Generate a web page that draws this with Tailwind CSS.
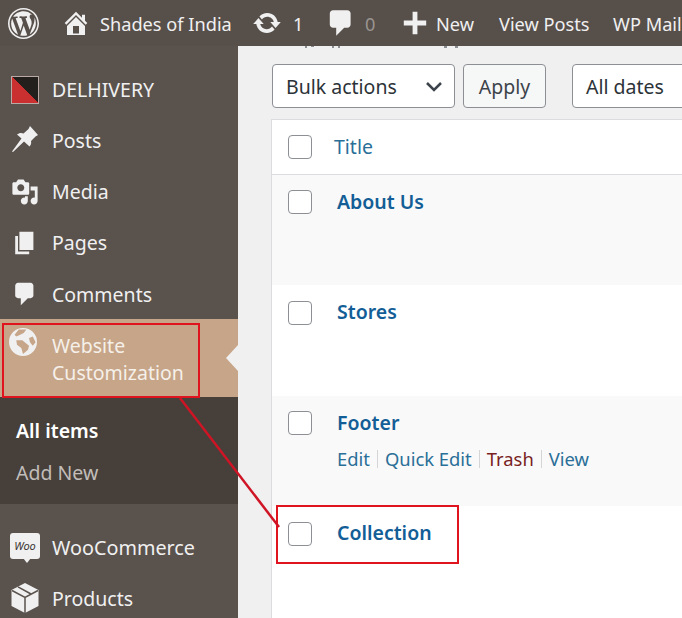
<!doctype html>
<html><head><meta charset="utf-8"><script src="https://cdn.jsdelivr.net/npm/@tailwindcss/browser@4"></script></head>
<body class="m-0">
<div class="relative w-[682px] h-[618px] overflow-hidden flex flex-col bg-[#f0f0f1] font-['Noto_Sans',sans-serif] text-[19.5px] leading-[26px]">
  <!-- top bar -->
  <header class="h-[46px] shrink-0 bg-[#574f4a] text-[#f0f0f1] flex items-center whitespace-nowrap text-[18.2px]">
    <svg class="ml-[8px] w-[31px] h-[31px] shrink-0" viewBox="0 0 20 20" fill="currentColor"><path d="M20 10c0-5.52-4.48-10-10-10S0 4.48 0 10s4.48 10 10 10 10-4.48 10-10zM10 1.01c4.96 0 8.99 4.03 8.99 8.99s-4.03 8.99-8.99 8.99S1.01 14.96 1.01 10 5.04 1.01 10 1.01zM8.01 14.82L4.96 6.61c.49-.03 1.05-.08 1.05-.08.43-.05.38-1.01-.06-.99 0 0-1.29.1-2.13.1-.15 0-.33 0-.52-.01 1.44-2.17 3.9-3.6 6.7-3.6 2.09 0 3.99.79 5.41 2.09-.6-.08-1.45.35-1.45 1.42 0 .66.38 1.22.79 1.88.31.54.5 1.22.5 2.21 0 1.34-1.27 4.48-1.27 4.48l-2.71-7.5c.48-.03.75-.16.75-.16.43-.05.38-1.1-.05-1.08 0 0-1.3.11-2.14.11-.78 0-2.11-.11-2.11-.11-.43-.02-.48 1.06-.05 1.08l.84.08 1.12 3.04zm6.02 2.15L16.64 10s.67-1.69.39-3.81c.63 1.14.94 2.42.94 3.81 0 2.96-1.56 5.58-3.94 6.97zM2.68 6.77L6.5 17.25c-2.67-1.3-4.47-4.08-4.47-7.25 0-1.16.2-2.23.65-3.23zm7.45 4.53l2.29 6.25c-.75.27-1.57.42-2.42.42-.72 0-1.41-.11-2.06-.3z"/></svg>
    <svg class="ml-[22px] w-[30px] h-[30px] shrink-0" viewBox="0 0 20 20" fill="currentColor"><path d="M16 8.500l1.530 1.530-1.060 1.060L10 4.620l-6.470 6.470-1.060-1.060L10 2.500l4 4v-2h2v4zm-6-2.460l6 5.990V18H4v-5.970zM12 17v-5H8v5h4z"/></svg>
    <span class="ml-[9px] w-[131px] shrink-0 pt-[1px]">Shades of India</span>
    <svg class="ml-[21px] w-[30px] h-[30px] shrink-0" viewBox="0 0 20 20" fill="currentColor"><path d="M10.200 3.280c3.530 0 6.430 2.610 6.920 6h2.080l-3.500 4-3.500-4h2.320c-.45-1.970-2.210-3.450-4.320-3.450-1.450 0-2.730.71-3.540 1.780L4.950 5.660C6.230 4.200 8.110 3.280 10.200 3.280zm-.4 13.440c-3.520 0-6.430-2.610-6.920-6H.8l3.500-4c1.170 1.330 2.330 2.670 3.500 4H5.480c.45 1.970 2.210 3.450 4.320 3.450 1.450 0 2.730-.71 3.540-1.780l1.710 1.950c-1.280 1.460-3.150 2.380-5.250 2.380z"/></svg>
    <span class="ml-[11px] w-[12px] shrink-0 pt-[1px]">1</span>
    <svg class="ml-[20px] w-[32px] h-[32px] shrink-0" viewBox="0 0 20 20" fill="currentColor"><path d="M5 2h9q.82 0 1.410.59T16 4v7q0 .82-.59 1.410T14 13h-2l-5 5v-5H5q-.82 0-1.410-.59T3 11V4q0-.82.59-1.410T5 2z"/></svg>
    <span class="ml-[8px] w-[12px] shrink-0 pt-[1px] text-[#9a9490]">0</span>
    <svg class="ml-[22px] w-[32px] h-[32px] shrink-0" viewBox="0 0 20 20" fill="currentColor"><path d="M17 8.500v3h-5.500V17h-3v-5.500H3v-3h5.500V3h3v5.500z"/></svg>
    <span class="ml-[5px] w-[40px] shrink-0 pt-[1px]">New</span>
    <span class="ml-[23px] w-[92px] shrink-0 pt-[1px]">View Posts</span>
    <span class="ml-[22px] shrink-0 pt-[1px]">WP Mail</span>
  </header>
  <div class="flex flex-1 min-h-0">
    <!-- sidebar -->
    <nav class="w-[238px] shrink-0 bg-[#5a524c] text-[#f0f0f1] pt-[18px]">
      <a class="flex items-center h-[51px] pl-[11px] gap-[12px]">
        <span class="w-[28px] h-[28px] border border-[#b9a9a4] shrink-0 bg-[linear-gradient(45deg,#c9302f_50%,#231f1d_50%)]"></span><span class="ml-[1px] pt-[1px]">DELHIVERY</span>
      </a>
      <a class="flex items-center h-[51px] pl-[11px] gap-[12px]">
        <svg class="w-[28px] h-[28px] shrink-0 mt-[-2px]" viewBox="0 0 28 28" fill="currentColor"><path d="M19 0 27 9 24.500 10.500 20 15C20.500 17 20 19 18.500 20.500L13 15.500 2 26 1 25.500 10.500 12.500 6 8.500C8 7 10 6.500 12.500 7.500L17.500 3z"/></svg>
        <span class="ml-[1px] pt-[1px]">Posts</span>
      </a>
      <a class="flex items-center h-[51px] pl-[11px] gap-[12px]">
        <svg class="w-[28px] h-[28px] shrink-0" viewBox="0 0 20 20" fill="currentColor"><path d="M13 11V4c0-.55-.45-1-1-1h-1.670L9 1H5L3.670 3H2c-.55 0-1 .45-1 1v7c0 .55.45 1 1 1h10c.55 0 1-.45 1-1zM7 4.500c1.380 0 2.500 1.120 2.500 2.500S8.380 9.500 7 9.500 4.500 8.380 4.500 7 5.620 4.500 7 4.500zM14 6h5v10.500c0 1.380-1.120 2.500-2.500 2.500S14 17.880 14 16.500s1.120-2.500 2.500-2.500c.17 0 .34.020.5.050V9h-3V6zm-4 8.050V13h2v3.500c0 1.380-1.120 2.500-2.500 2.500S7 17.880 7 16.500 8.120 14 9.500 14c.17 0 .34.020.5.050z"/></svg>
        <span class="ml-[1px] pt-[1px]">Media</span>
      </a>
      <a class="flex items-center h-[51px] pl-[11px] gap-[12px]">
        <svg class="w-[28px] h-[28px] shrink-0" viewBox="0 0 20 20" fill="currentColor"><path d="M6 15V2h10v13H6zm-1 1h8v2H3V5h2v11z"/></svg>
        <span class="ml-[1px] pt-[1px]">Pages</span>
      </a>
      <a class="flex items-center h-[51px] pl-[11px] gap-[12px]">
        <svg class="w-[28px] h-[28px] shrink-0" viewBox="0 0 20 20" fill="currentColor"><path d="M5 2h9q.82 0 1.410.59T16 4v7q0 .82-.59 1.410T14 13h-2l-5 5v-5H5q-.82 0-1.410-.59T3 11V4q0-.82.59-1.410T5 2z"/></svg>
        <span class="ml-[1px] pt-[2px]">Comments</span>
      </a>
      <a class="relative flex h-[78px] pl-[9px] gap-[15px] pt-[9px] bg-[#c7a588]">
        <svg class="w-[28px] h-[28px] shrink-0" viewBox="0 0 20 20"><path fill="currentColor" fill-rule="evenodd" d="M10 0a10 10 0 1 0 0 20a10 10 0 0 0 0-20zM7 1H12.400L10.500 3.600 8 4.800 5.200 6 4 4.800zM5.200 8.800H9.500L14.300 12.600 13.600 15.500 10 18.600 8.800 14.300 5.700 11.900zM14.300 7.100 17 6 19 10.200 17 12.600 15 10.200z"/></svg>
        <span class="text-[#f5f0ea] leading-[27px] mt-[4px]">Website<br>Customization</span>
        <span class="absolute right-0 top-[26px] w-0 h-0 border-y-[13px] border-y-transparent border-r-[12px] border-r-[#f0f0f1]"></span>
      </a>
      <div class="h-[107px] bg-[#463f3a] pl-[16px] pt-[21px]">
        <div class="font-semibold text-white h-[26px]">All items</div>
        <div class="mt-[16px] text-[#c2bdb9]">Add New</div>
      </div>
      <a class="flex items-center h-[51px] mt-[17px] pl-[10px] gap-[12px]">
        <span class="relative w-[30px] h-[26px] mt-[-2px] rounded-[3px] bg-[#f0f0f1] text-[#3a3532] text-[11px] leading-[26px] text-center shrink-0 italic">Woo<span class="absolute left-[13px] top-[25px] w-0 h-0 border-x-[4px] border-x-transparent border-t-[5px] border-t-[#f0f0f1]"></span></span>
        <span class="pt-[2px] text-[19.8px]">WooCommerce</span>
      </a>
      <a class="flex items-center h-[51px] pl-[11px] gap-[12px]">
        <svg class="w-[28px] h-[30px] shrink-0" viewBox="0 0 28 30"><path fill="currentColor" d="M14 0 27.500 7v16L14 30 .5 23V7z"/><path fill="none" stroke="#5a524c" stroke-width="1.500" d="M1 7.500 14 14.500 27 7.500M14 14.500V30M7 3.800 20 11"/></svg>
        <span class="ml-[1px] pt-[2px]">Products</span>
      </a>
    </nav>
    <!-- content -->
    <main class="flex-1 min-w-0 pl-[33px]">
      <div class="h-[3px] flex items-start pl-[34px] gap-[4px]">
        <span class="w-[2px] h-[2px] bg-[#8a8d91]"></span><span class="w-[3px] h-[1px] bg-[#8a8d91]"></span><span class="ml-[14px] w-[2px] h-[2px] bg-[#8a8d91]"></span><span class="w-[2px] h-[2px] bg-[#8a8d91]"></span><span class="ml-[100px] w-[3px] h-[2px] bg-[#8a8d91]"></span><span class="ml-[4px] w-[3px] h-[2px] bg-[#8a8d91]"></span>
      </div>
      <div class="flex mt-[15px] h-[44px] text-[#2c3338] whitespace-nowrap">
        <div class="ml-[1px] w-[183px] shrink-0 flex items-center justify-between pl-[13px] pr-[11px] bg-white border border-[#8c8f94] rounded-[4px]">
          <span class="pt-[2px]">Bulk actions</span>
          <svg class="w-[18px] h-[18px] shrink-0" viewBox="0 0 18 18" fill="none" stroke="#3c434a" stroke-width="2.500"><path d="M2 6l7 7 7-7"/></svg>
        </div>
        <div class="ml-[8px] w-[83px] shrink-0 flex items-center justify-center bg-[#f6f7f7] border border-[#8c8f94] rounded-[4px] text-[#3c434a] pt-[2px]">Apply</div>
        <div class="ml-[26px] w-[200px] shrink-0 flex items-center pl-[13px] pt-[2px] bg-white border border-[#8c8f94] rounded-[4px]">All dates</div>
      </div>
      <div class="mt-[11px] border-t border-l border-[#dcdcde] bg-white">
        <div class="h-[55px] flex items-center pl-[16px] border-b border-[#dcdcde] bg-white">
          <span class="w-[24px] h-[24px] rounded-[4px] border border-[#8c8f94] bg-white shrink-0"></span>
          <span class="ml-[22px] text-[#2a6f98]">Title</span>
        </div>
        <div class="h-[110px] flex items-start pl-[16px] pt-[15px] bg-[#f9f9f9]">
          <span class="w-[24px] h-[24px] rounded-[4px] border border-[#8c8f94] bg-white shrink-0"></span>
          <span class="ml-[25px] mt-[-1px] font-semibold text-[#135e96]">About Us</span>
        </div>
        <div class="h-[111px] flex items-start pl-[16px] pt-[16px] bg-white">
          <span class="w-[24px] h-[24px] rounded-[4px] border border-[#8c8f94] bg-white shrink-0"></span>
          <span class="ml-[25px] mt-[-2px] font-semibold text-[#135e96]">Stores</span>
        </div>
        <div class="h-[110px] flex items-start pl-[16px] pt-[15px] bg-[#f9f9f9]">
          <span class="w-[24px] h-[24px] rounded-[4px] border border-[#8c8f94] bg-white shrink-0"></span>
          <div class="ml-[25px] mt-[-1px]">
            <div class="font-semibold text-[#135e96]">Footer</div>
            <div class="mt-[10px] flex items-center text-[#2a6f98] whitespace-nowrap text-[18.4px]">
              <span>Edit</span><span class="mx-[7px] w-[1px] h-[18px] bg-[#d5d5d8]"></span>
              <span>Quick Edit</span><span class="mx-[7px] w-[1px] h-[18px] bg-[#d5d5d8]"></span>
              <span class="text-[#7a1f1f]">Trash</span><span class="mx-[7px] w-[1px] h-[18px] bg-[#d5d5d8]"></span>
              <span>View</span>
            </div>
          </div>
        </div>
        <div class="h-[112px] flex items-start pl-[16px] pt-[16px] bg-white">
          <span class="w-[24px] h-[24px] rounded-[4px] border border-[#8c8f94] bg-white shrink-0"></span>
          <span class="ml-[25px] mt-[-2px] font-semibold text-[#135e96]">Collection</span>
        </div>
      </div>
    </main>
  </div>
  <!-- annotation overlays -->
  <div class="absolute left-[2px] top-[323px] w-[198px] h-[75px] border-[2.5px] border-[#e0141f]"></div>
  <div class="absolute left-[276px] top-[505px] w-[183px] h-[59px] border-[2.5px] border-[#e0141f]"></div>
  <svg class="absolute left-0 top-0 w-[682px] h-[618px] pointer-events-none" viewBox="0 0 682 618"><path d="M180 398 279 527" stroke="#cf1525" stroke-width="2.500" fill="none"/></svg>
</div>
</body></html>
